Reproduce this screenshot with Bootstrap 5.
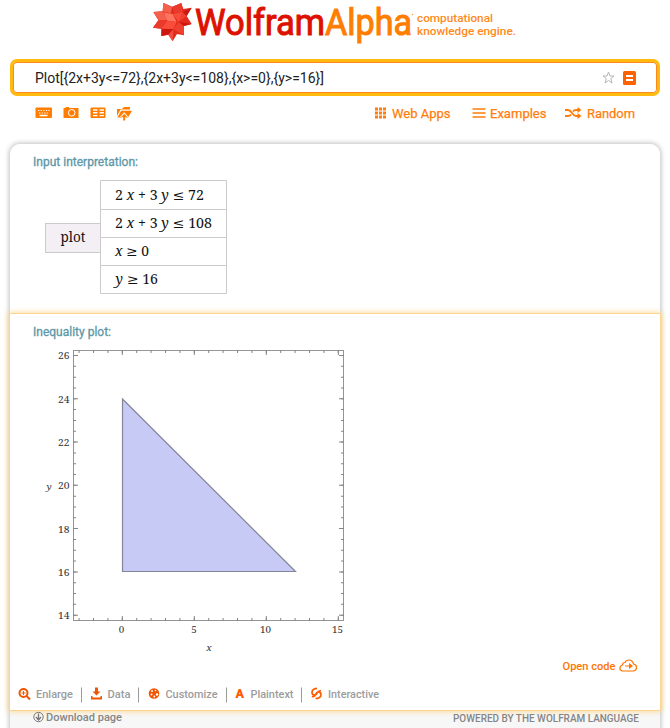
<!DOCTYPE html>
<html lang="en">
<head>
<meta charset="utf-8">
<meta name="viewport" content="width=device-width, initial-scale=1">
<title>Wolfram|Alpha</title>
<link href="https://cdn.jsdelivr.net/npm/bootstrap@5.3.0/dist/css/bootstrap.min.css" rel="stylesheet">
<style>
body{font-family:Roboto,sans-serif;font-size:13px;line-height:18px;color:#222;height:728px;overflow:hidden;background:#fff}
svg{display:block;flex:none;overflow:visible}
.brand-row{height:59px}
.query{height:37px;margin:0 10px;border:3px solid #ffb90f;border-radius:7px;box-shadow:inset 0 0 0 1px #ff8a1c;padding:0 20px 0 21.6px;font-size:14px}
.tools{height:47.5px;padding:9px 35px 0}
.toplinks{color:#ff7d0a;font-size:13.6px;font-weight:400}
.toplinks text{stroke:#ff7d0a;stroke-width:.25px}
.results{margin:0 10px;border-radius:10px 10px 0 0;box-shadow:0 0 5px 1px rgba(0,0,0,.25);background:#f7f7f7;height:600px}
.pod{background:#fff}
.pod-one{height:170.5px;border-radius:10px 10px 0 0;padding-top:8.5px}
.pod-two{height:396px;box-shadow:0 0 0 1px #fdd592,0 0 6px 1px #ffd27f;padding-top:9px;position:relative}
.pod-title{color:#5e98a8;font-weight:400;font-size:12.4px;margin:0;padding-left:23px;line-height:18px}
.pod-title text{stroke:#5e98a8;stroke-width:.3px}
.formula{font-family:"Noto Serif","DejaVu Serif",serif;color:#111}
.actions{height:18px;color:#9c9c9c;font-weight:500;font-size:11.5px}
.footer-line{color:#858585;height:18px;padding:0 22px 0 23px}
</style>
</head>
<body>
<header class="brand-row">
<svg width="670" height="50" role="img" aria-label="WolframAlpha computational knowledge engine">
 <g transform="translate(152 0) scale(.33333)">
  <path fill="#e32a1c" d="M34 9 61 20 88 9 94 27 119 23 104 48 119 72 96 78 96 106 75 102 62 124 49 104 28 108 28 86 3 83 19 61 4 36 32 34Z"/>
  <path fill="#f4604c" d="M34 9 61 20 56 40 32 34ZM4 36 32 34 46 60 19 61ZM28 86 46 62 28 108Z"/>
  <path fill="#e93a2b" d="M88 9 92 36 66 40 61 20ZM3 83 19 61 46 60 28 86Z"/>
  <path fill="#ff7460" d="M35 37 62 42 74 66 46 62Z"/>
  <path fill="#f94c3b" d="M62 42 92 36 80 66ZM46 62 74 66 64 88 29 86Z"/>
  <path fill="#ef4030" d="M80 66 92 36 104 48ZM64 88 80 66 96 78 96 106Z"/>
  <path fill="#cc160f" d="M92 36 119 23 104 48ZM80 66 119 72 96 78ZM29 86 64 88 49 104 28 108Z"/>
  <path fill="#ef4e40" d="M62 124 49 104 64 88Z"/>
 </g>
 <g font-family="Roboto" font-size="36" stroke-width="1">
 <text x="195" y="34.800" fill="#dd1100" stroke="#dd1100" textLength="130" lengthAdjust="spacingAndGlyphs">Wolfram</text>
 <text x="325" y="34.800" fill="#ff7d00" stroke="#ff7d00" textLength="87" lengthAdjust="spacingAndGlyphs">Alpha</text>
 </g>
 <circle cx="412.500" cy="14.500" r=".8" fill="#ff9c40"/>
 <g font-family="Roboto" font-weight="500" font-size="11" fill="#ff8a1c">
 <text x="417" y="22" textLength="76" lengthAdjust="spacingAndGlyphs">computational</text>
 <text x="417" y="35" textLength="99" lengthAdjust="spacingAndGlyphs">knowledge engine.</text>
 </g>
</svg>
</header>

<div class="query d-flex align-items-center">
 <svg width="300" height="30" class="me-auto"><text x="0" y="20" font-size="14" fill="#222" textLength="289" lengthAdjust="spacingAndGlyphs">Plot[{2x+3y&lt;=72},{2x+3y&lt;=108},{x&gt;=0},{y&gt;=16}]</text></svg>
 <svg width="13" height="13" class="me-2" fill="none" stroke="#b5b5b5"><path d="M6.500 1 8 5h4L8.800 7.700 10 12 6.500 9.500 3 12 4.200 7.700 1 5h4Z"/></svg>
 <svg width="14" height="14"><rect x="0" width="13" height="14" rx="1.500" fill="#ff6200"/><path d="M3 5h7m-7 4h7" stroke="#fff" stroke-width="2"/></svg>
</div>

<nav class="tools d-flex justify-content-between align-items-start">
 <svg width="98" height="17" fill="#ff7d00">
  <rect x=".5" y="2.500" width="16.500" height="10.500" rx="1"/>
  <path d="M3 5.500h12M4 8h10" stroke="#fff" stroke-dasharray="1.300 1.300"/><path d="M4.500 10.500h8" stroke="#fff" stroke-width="1.500"/>
  <path d="M28.500 3h2V2h3.500v1h9.500v10h-15Z"/><circle cx="36.700" cy="7.800" r="3.300" fill="none" stroke="#fff"/>
  <rect x="55.500" y="2.500" width="15" height="10.500" rx="1"/>
  <path d="M58 5h4.500M58 7.800h4.500M58 10.600h4.500M64.500 5H69M64.500 7.800H69M64.500 10.600H69" stroke="#fff" stroke-width="1.400"/>
  <path d="M82 11V4h5l2-2h6v2.500h-9.500ZM86.200 5.700H97L93 12.500H82.300Z"/>
  <path d="M89.200 7.300 93.500 12H91v4.200h-3.700V12H85Z" fill="#fff"/><path d="m89.200 8.700 3 3.300h-2v3.500h-2V12h-2Z"/>
 </svg>
 <div class="toplinks">
 <svg width="262" height="18" fill="#ff7d0a">
  <path d="M2 4h11M2 8h11M2 12h11" stroke="#ff7d0a" stroke-width="3" stroke-dasharray="3 1"/>
  <text x="19" y="13" textLength="58.500" lengthAdjust="spacingAndGlyphs">Web Apps</text>
  <path d="M99.500 4h13M99.500 8h13M99.500 12h13" stroke="#ff7d0a" stroke-width="1.700"/>
  <text x="117" y="13" textLength="56.500" lengthAdjust="spacingAndGlyphs">Examples</text>
  <path d="M192 5h3q2 0 4 3t4 3h3M192 11h3q2 0 3-1.500M200 6.500q1-1.500 3-1.500h3" fill="none" stroke="#ff7d0a" stroke-width="1.800"/>
  <path d="m204.500 2 4 3-4 3ZM204.500 8l4 3-4 3Z"/>
  <text x="214" y="13" textLength="48" lengthAdjust="spacingAndGlyphs">Random</text>
 </svg>
 </div>
</nav>

<main class="results">
<section class="pod pod-one">
 <h2 class="pod-title"><svg width="120" height="18" fill="currentColor"><text x="0" y="14" textLength="105" lengthAdjust="spacingAndGlyphs">Input interpretation:</text></svg></h2>
 <svg class="formula" width="220" height="120" viewBox="10 170 220 120">
  <rect x="45.500" y="223.500" width="55" height="29" fill="#f4eff5" stroke="#cbcbcb"/>
  <path d="M100.500 180.500h126v113h-126ZM100.500 209.500h126M100.500 237.500h126M100.500 265.500h126" fill="#fff" stroke="#cbcbcb"/>
  <g font-size="13.500" fill="#111">
  <text x="60.500" y="242" textLength="25" lengthAdjust="spacingAndGlyphs">plot</text>
  <text x="115" y="200" textLength="89" lengthAdjust="spacingAndGlyphs">2 <tspan font-style="italic">x</tspan> + 3 <tspan font-style="italic">y</tspan> ≤ 72</text>
  <text x="115" y="228" textLength="97" lengthAdjust="spacingAndGlyphs">2 <tspan font-style="italic">x</tspan> + 3 <tspan font-style="italic">y</tspan> ≤ 108</text>
  <text x="115" y="256" textLength="34" lengthAdjust="spacingAndGlyphs"><tspan font-style="italic">x</tspan> ≥ 0</text>
  <text x="115.500" y="284" textLength="42.500" lengthAdjust="spacingAndGlyphs"><tspan font-style="italic">y</tspan> ≥ 16</text>
  </g>
 </svg>
</section>

<section class="pod pod-two">
 <h2 class="pod-title"><svg width="120" height="18" fill="currentColor"><text x="0" y="13" textLength="78" lengthAdjust="spacingAndGlyphs">Inequality plot:</text></svg></h2>
 <svg class="formula" width="350" height="315" viewBox="10 341 350 315">
  <path d="M122.500 399V571.500H295.500Z" fill="#c6caf5" stroke="#85859a" stroke-width="1.200"/>
  <rect x="73.500" y="350.500" width="270" height="270" fill="none" stroke="#959595"/>
  <g stroke="#858585" fill="none">
   <path d="M78.600 619.500H339M78.600 351.500H339" stroke-width="3" stroke-dasharray="1 13.400"/>
   <path d="M121.800 618.500H339M121.800 352.500H339" stroke-width="5" stroke-dasharray="1 71"/>
   <path d="M74.500 355V616M342.500 355V616" stroke-width="3" stroke-dasharray="1 9.820"/>
   <path d="M75.500 355V616M341.500 355V616" stroke-width="5" stroke-dasharray="1 42.280"/>
  </g>
  <g font-size="9.800" fill="#333">
   <text x="58" y="359" textLength="11.500" lengthAdjust="spacingAndGlyphs">26</text><text x="58" y="402.500" textLength="11.500" lengthAdjust="spacingAndGlyphs">24</text><text x="58" y="446" textLength="11.500" lengthAdjust="spacingAndGlyphs">22</text><text x="58" y="489" textLength="11.500" lengthAdjust="spacingAndGlyphs">20</text><text x="58" y="532.500" textLength="11.500" lengthAdjust="spacingAndGlyphs">18</text><text x="58" y="576" textLength="11.500" lengthAdjust="spacingAndGlyphs">16</text><text x="58" y="619" textLength="11.500" lengthAdjust="spacingAndGlyphs">14</text>
  </g>
  <g font-size="9.800" fill="#333" text-anchor="middle">
   <text x="121.500" y="633">0</text><text x="194" y="633">5</text><text x="265.500" y="633">10</text><text x="337.500" y="633">15</text>
   <text x="209" y="651" font-style="italic">x</text><text x="49" y="490" font-style="italic">y</text>
  </g>
 </svg>
 <div class="d-flex justify-content-end pe-3 me-1">
 <svg width="80" height="18" fill="#ff7400"><text x="2.500" y="14" font-size="11.500" font-weight="500" textLength="53" lengthAdjust="spacingAndGlyphs">Open code</text>
 <path d="M62.500 15.500h11q3-.5 3-3.500 0-3-3-3.500-1-4-4.500-4-3 0-4 2.500-2.500 0-2.500 2.500-3 1-2.500 3.500 0 2 2.500 2.500ZM65 10.500h5" fill="none" stroke="#ff7400" stroke-width="1.200" transform="translate(0 -.5)"/><path d="M69 7l4 3-4 3Z"/></svg>
 </div>
 <div class="actions mt-2 pt-1">
 <svg width="390" height="18" fill="#9c9c9c">
  <g fill="none" stroke="#f25500" stroke-width="2"><circle cx="13.500" cy="7" r="4"/><path d="m16.500 10 3.500 3.500"/><path d="M11.500 7h4M13.500 5v4" stroke-width="1"/></g>
  <text x="26" y="12" textLength="37" lengthAdjust="spacingAndGlyphs">Enlarge</text>
  <path d="M71.500 1.500v15M128.500 1.500v15M216.500 1.500v15M291.500 1.500v15" stroke="#999"/>
  <path d="M85 1.500h3v4h2.500L86.500 9.500 82.500 5.500H85ZM81 10h1.500v1.500h8V10H92v3.500H81Z" fill="#f25500"/>
  <text x="97.500" y="12" textLength="23" lengthAdjust="spacingAndGlyphs">Data</text>
  <circle cx="144" cy="7.500" r="5.300" fill="#f25500"/><g fill="#fff"><circle cx="142" cy="5" r="1"/><circle cx="145.500" cy="4.500" r=".8"/><circle cx="147" cy="8.500" r="1.200"/><circle cx="141.500" cy="8.500" r="1"/><circle cx="144.300" cy="10.500" r=".9"/></g>
  <text x="155.500" y="12" textLength="52" lengthAdjust="spacingAndGlyphs">Customize</text>
  <text x="225.500" y="12" font-size="12.500" font-weight="900" fill="#ff5c00">A</text>
  <text x="240.500" y="12" textLength="43" lengthAdjust="spacingAndGlyphs">Plaintext</text>
  <g fill="none" stroke="#ff5c00" stroke-width="1.700"><path d="M307 2.300c-3 .3-5 2.200-5 4.200 0 3 4 3.300 5 .8.800-2 2-2.500 4-2.800M301.800 10.500c2 .3 3.500-.8 4.200-2.800 1-2.500 5-2.200 5 .8 0 2.500-2.500 4-5.500 4"/></g>
  <text x="318" y="12" textLength="51" lengthAdjust="spacingAndGlyphs">Interactive</text>
 </svg>
 </div>
</section>
<footer class="footer-line d-flex justify-content-between position-relative">
 <svg width="100" height="18" fill="#858585"><g fill="none" stroke="#777"><circle cx="5.500" cy="7" r="4.700"/><path d="M5.500 3.500v6M3 7l2.500 3L8 7" stroke-width="1.300"/></g><text x="13" y="11" font-size="11.500" font-weight="500" textLength="76" lengthAdjust="spacingAndGlyphs">Download page</text></svg>
 <svg width="187" height="18" fill="#858585"><text x="2" y="12" font-size="10.500" font-weight="500" textLength="186" lengthAdjust="spacingAndGlyphs">POWERED BY THE WOLFRAM LANGUAGE</text></svg>
</footer>
</main>
<script src="https://cdn.jsdelivr.net/npm/bootstrap@5.3.0/dist/js/bootstrap.bundle.min.js"></script>
</body>
</html>
